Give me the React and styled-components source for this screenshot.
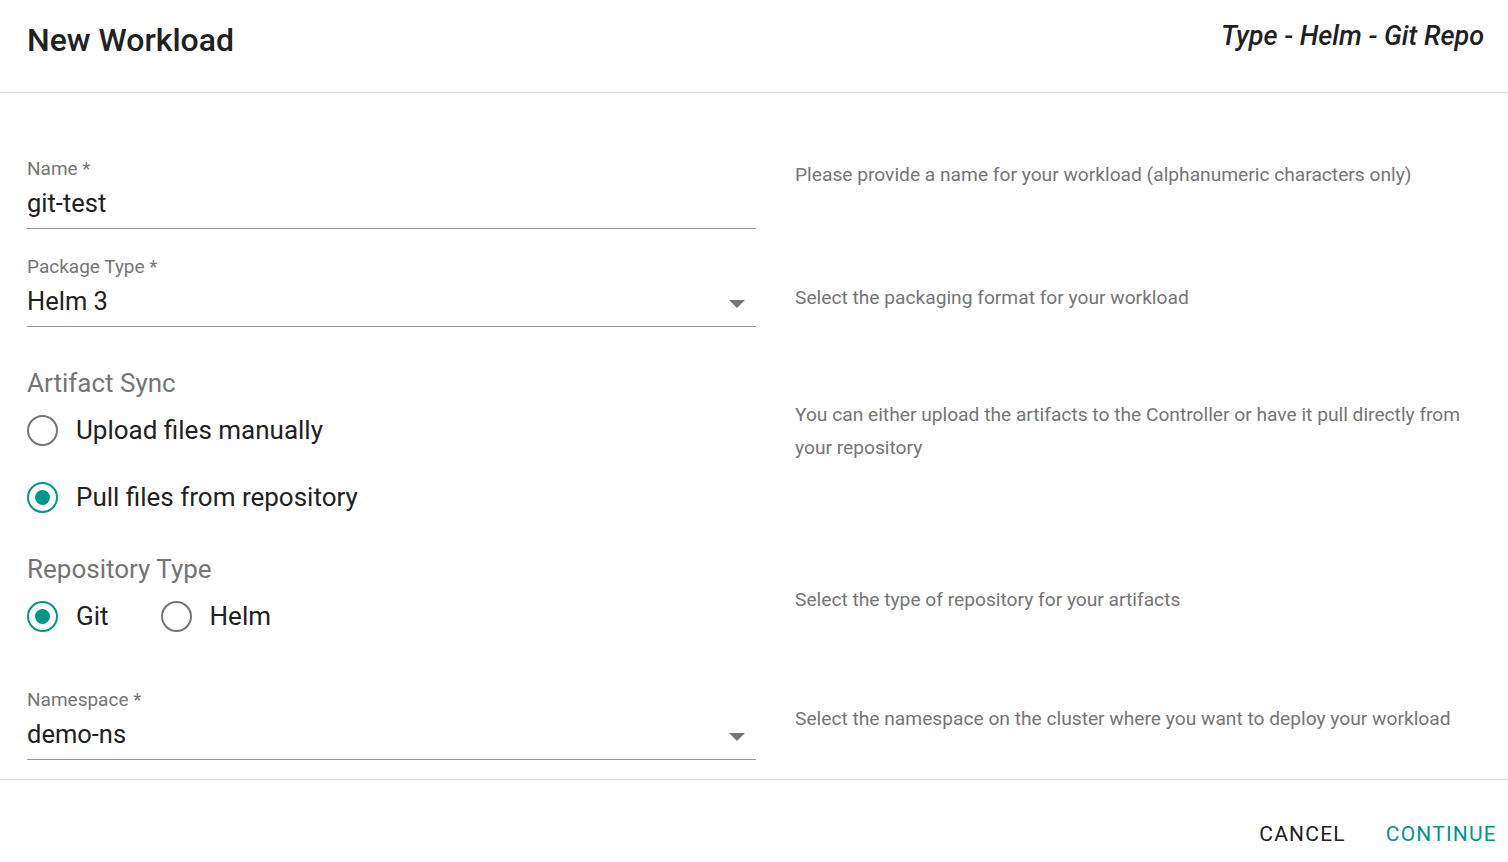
import React from 'react';
import styled, { createGlobalStyle } from 'styled-components';

const GlobalStyle = createGlobalStyle`
  html, body {
    margin: 0;
    padding: 0;
    background: #fff;
  }
  body {
    font-family: Roboto, "Liberation Sans", sans-serif;
    color: #212121;
    -webkit-font-smoothing: antialiased;
  }
`;

const Page = styled.div`
  width: 1508px;
  height: 862px;
  display: flex;
  flex-direction: column;
  overflow: hidden;
`;

const Header = styled.header`
  flex-shrink: 0;
  height: 92px;
  border-bottom: 1px solid #dcdcdc;
  display: flex;
  justify-content: space-between;
  align-items: flex-start;
  padding: 0 24px 0 27px;
`;

const Title = styled.h1`
  margin: 18px 0 0;
  font-size: 32px;
  line-height: 44px;
  font-weight: 500;
  color: #212121;
`;

const Subtitle = styled.h2`
  margin: 18px 0 0;
  font-size: 27px;
  line-height: 36px;
  font-weight: 500;
  font-style: italic;
  color: #212121;
`;

const Form = styled.section`
  flex-shrink: 0;
  padding: 65px 24px 0 27px;
  display: flex;
  flex-direction: column;
`;

const Row = styled.div`
  display: grid;
  grid-template-columns: 729px 1fr;
  column-gap: 39px;
  margin-top: ${(p) => p.$top || 0}px;
`;

const Description = styled.p`
  margin: ${(p) => p.$offset || 0}px 0 0;
  max-width: 690px;
  font-size: 19.2px;
  line-height: 33px;
  color: #757575;
`;

const Field = styled.div`
  display: flex;
  flex-direction: column;
`;

const Label = styled.label`
  font-size: 19px;
  line-height: 22px;
  color: #757575;
`;

const Value = styled.div`
  margin-top: 7px;
  padding-bottom: 9px;
  border-bottom: 1px solid #949494;
  display: flex;
  justify-content: space-between;
  align-items: center;
  font-size: 25.5px;
  line-height: 32px;
  color: #212121;
`;

const Arrow = styled.svg`
  width: 16px;
  height: 8px;
  margin: 6px 11px 0 0;
  fill: #757575;
`;

const GroupTitle = styled.div`
  font-size: 26px;
  line-height: 32px;
  color: #757575;
  margin-bottom: 7px;
`;

const RadioList = styled.div`
  display: flex;
  flex-direction: ${(p) => (p.$inline ? 'row' : 'column')};
  gap: ${(p) => (p.$inline ? '52px' : '19px')};
`;

const RadioRow = styled.label`
  height: 48px;
  display: flex;
  align-items: center;
  gap: 18px;
  font-size: 26px;
  color: #212121;
  cursor: pointer;
`;

const RadioCircle = styled.span`
  flex-shrink: 0;
  width: 31px;
  height: 31px;
  box-sizing: border-box;
  border-radius: 50%;
  border: 2.5px solid ${(p) => (p.$checked ? '#009688' : '#757575')};
  display: flex;
  align-items: center;
  justify-content: center;

  &::after {
    content: '';
    width: 15px;
    height: 15px;
    border-radius: 50%;
    background: #009688;
    display: ${(p) => (p.$checked ? 'block' : 'none')};
  }
`;

const Footer = styled.footer`
  flex-shrink: 0;
  box-sizing: border-box;
  margin-top: auto;
  height: 83px;
  border-top: 1px solid #dcdcdc;
  display: flex;
  justify-content: flex-end;
  align-items: flex-start;
  padding: 36px 11px 0 0;
  gap: 40px;
`;

const Button = styled.button`
  border: none;
  background: none;
  padding: 0;
  font-family: inherit;
  font-size: 21px;
  line-height: 36px;
  letter-spacing: 1.2px;
  text-transform: uppercase;
  color: ${(p) => (p.$primary ? '#009688' : '#212121')};
  cursor: pointer;
`;

const DropArrow = () => (
  <Arrow viewBox="0 0 16 8">
    <polygon points="0,0 16,0 8,8" />
  </Arrow>
);

const Radio = ({ checked, children }) => (
  <RadioRow>
    <RadioCircle $checked={checked} />
    {children}
  </RadioRow>
);

const App = () => (
  <Page>
    <GlobalStyle />
    <Header>
      <Title>New Workload</Title>
      <Subtitle>Type - Helm - Git Repo</Subtitle>
    </Header>

    <Form>
      <Row>
        <Field>
          <Label>Name *</Label>
          <Value>git-test</Value>
        </Field>
        <Description $offset={0}>
          Please provide a name for your workload (alphanumeric characters only)
        </Description>
      </Row>

      <Row $top={27}>
        <Field>
          <Label>Package Type *</Label>
          <Value>
            Helm 3
            <DropArrow />
          </Value>
        </Field>
        <Description $offset={25}>Select the packaging format for your workload</Description>
      </Row>

      <Row $top={40}>
        <Field>
          <GroupTitle>Artifact Sync</GroupTitle>
          <RadioList>
            <Radio>Upload files manually</Radio>
            <Radio checked>Pull files from repository</Radio>
          </RadioList>
        </Field>
        <Description $offset={31}>
          You can either upload the artifacts to the Controller or have it pull directly from
          your repository
        </Description>
      </Row>

      <Row $top={32}>
        <Field>
          <GroupTitle>Repository Type</GroupTitle>
          <RadioList $inline>
            <Radio checked>Git</Radio>
            <Radio>Helm</Radio>
          </RadioList>
        </Field>
        <Description $offset={30}>Select the type of repository for your artifacts</Description>
      </Row>

      <Row $top={49}>
        <Field>
          <Label>Namespace *</Label>
          <Value>
            demo-ns
            <DropArrow />
          </Value>
        </Field>
        <Description $offset={13}>
          Select the namespace on the cluster where you want to deploy your workload
        </Description>
      </Row>
    </Form>

    <Footer>
      <Button>Cancel</Button>
      <Button $primary>Continue</Button>
    </Footer>
  </Page>
);

export default App;
